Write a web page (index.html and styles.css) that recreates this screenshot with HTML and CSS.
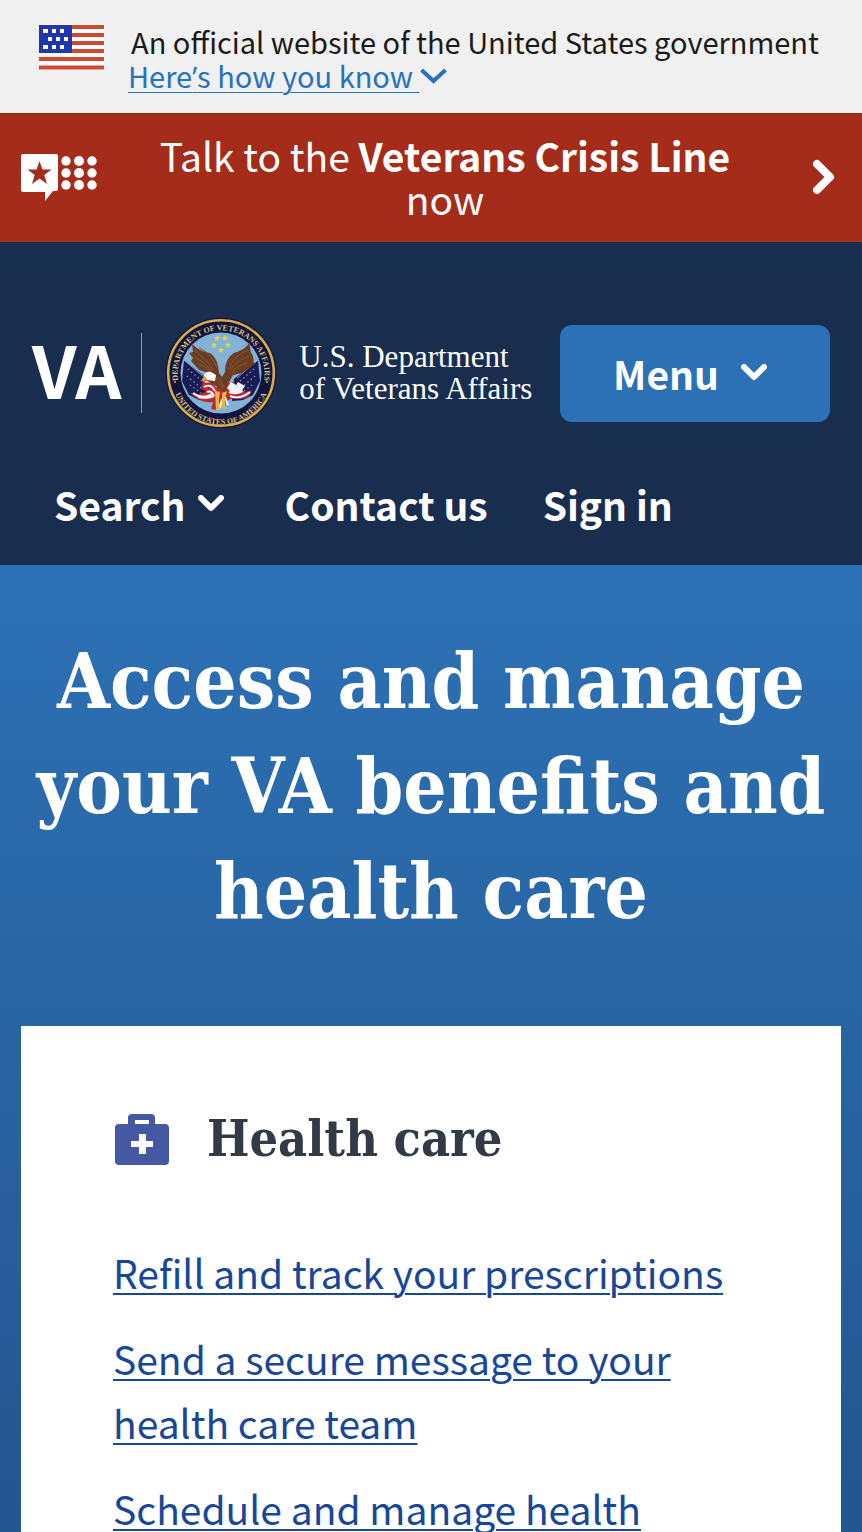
FILE: index.html
```html
<!DOCTYPE html>
<html lang="en">
<head>
<meta charset="utf-8">
<meta name="viewport" content="width=device-width, initial-scale=1">
<title>VA.gov Home</title>
<link rel="stylesheet" href="styles.css">
</head>
<body>
<section class="gov-banner" aria-label="Official government website">
  <svg class="flag" viewBox="0 0 65 46" aria-hidden="true">
    <path fill="#fff" d="M0 0h65v46H0z"/>
    <path stroke="#cc4a2e" stroke-width="4" d="M0 3h65M0 11h65M0 19h65M0 27h65M0 35h65M0 43.500h65"/>
    <path fill="#2037ab" d="M0 1h33v28H0z"/>
    <path fill="#fff" d="M4 5h5v4H4zM13 5h4v4h-4zM21 5h4v4h-4zM9 13h4v4H9zM17 13h4v4h-4zM25 13h4v4h-4zM4 21h5v4H4zM13 21h4v4h-4zM21 21h4v4h-4z"/>
  </svg>
  <div class="gov-text">
    <p class="gov-title">An official website of the United States government</p>
    <button class="gov-toggle" type="button"><span class="gov-label">Here<span class="apostrophe">’</span>s how you know&nbsp;</span><svg class="gov-chevron" viewBox="0 0 27 18" aria-hidden="true"><path fill="none" stroke="#2672bf" stroke-width="4" d="M1.500 3l12 11 12-11"/></svg></button>
  </div>
</section>

<a class="crisis" href="#crisis">
  <svg class="crisis-icon" viewBox="0 0 76 47" aria-hidden="true">
    <path fill="#fff" d="M2 0h33q2 0 2 2v33q0 2-2 2h-3L24 47V38H2q-2 0-2-2V2q0-2 2-2z"/>
    <path fill="#a52c1a" d="M18.500 7l3 8.500h9l-7.200 5.500 2.700 9-7.500-5.400-7.500 5.400 2.700-9L6.500 15.500h9z"/>
    <g fill="#fff"><circle cx="45" cy="7" r="4.700"/><circle cx="58" cy="7" r="5"/><circle cx="71" cy="7" r="4.700"/><circle cx="45" cy="19" r="4.700"/><circle cx="58" cy="19" r="5"/><circle cx="71" cy="19" r="4.700"/><circle cx="45" cy="31" r="4.700"/><circle cx="58" cy="31" r="5"/><circle cx="71" cy="31" r="4.700"/></g>
  </svg>
  <span class="crisis-text">Talk to the <strong>Veterans Crisis Line</strong> now</span>
  <svg class="crisis-arrow" viewBox="0 0 22 36" aria-hidden="true"><path fill="none" stroke="#fff" stroke-width="8" stroke-linecap="round" stroke-linejoin="round" d="M4 5l13 13L4 31"/></svg>
</a>

<header class="header">
  <div class="brand-row">
    <a class="brand" href="#home" aria-label="VA, U.S. Department of Veterans Affairs">
      <span class="brand-va">VA</span>
      <svg class="seal" viewBox="0 0 112 112" aria-hidden="true">
        <defs>
          <path id="arc-top" d="M13.500 66A43.500 43.500 0 1 1 98.500 66"/>
          <path id="arc-bottom" d="M7 65A49.500 49.500 0 0 0 105 65"/>
          <clipPath id="disc"><circle cx="56" cy="56" r="40.500"/></clipPath>
        </defs>
        <circle cx="56" cy="56" r="55.500" fill="#15163c"/>
        <circle cx="56" cy="56" r="52.800" fill="#11143e" stroke="#d9ad4e" stroke-width="2.600"/>
        <circle cx="56" cy="56" r="40.500" fill="#82b3d4"/>
        <text class="seal-text"><textPath href="#arc-top" startOffset="50%" text-anchor="middle">DEPARTMENT OF VETERANS AFFAIRS</textPath></text>
        <text class="seal-text"><textPath href="#arc-bottom" startOffset="50%" text-anchor="middle">UNITED STATES OF AMERICA</textPath></text>
        <circle cx="10" cy="65" r="1" fill="#d9ad4e"/><circle cx="102" cy="65" r="1" fill="#d9ad4e"/>
        <g clip-path="url(#disc)">
          <path fill="#171c52" d="M19 43l24 19 2 22-11-1-10-5-7-14zM93 43L69 62l-2 22 11-1 10-5 7-14z"/>
          <path stroke="#c9d6e8" stroke-width=".7" d="M19 43l21 18M93 43L72 61"/>
          <path fill="none" stroke="#8fa3c9" stroke-width="1.300" stroke-dasharray="1.300 3" d="M23 52l15 13M22 59l14 12M25 68l11 8M89 52L74 65M90 59L76 71M87 68l-11 8"/>
          <path fill="#bd2938" d="M24 75q10 5 17-1l-5-2 2-9 8-4 11 8 12-2 5 9q7 2 13-1-2 9-12 9-8-1-12 1l-4 8-4-5-4 7-5-1 2-7q-12 2-24-10z"/>
          <path fill="none" stroke="#fff" stroke-width="1.900" d="M28 76q9 7 19 1M40 65q7-3 12 5M39 70q7-4 11 4M42 75q5-2 7 4M33 80q8 2 16-1M65 79q10 4 20-4M64 75q8 3 14-1M57 82l-2 9M60 80l3 8"/>
          <path fill="#eef2f8" d="M66 65l5 3 2-3 7 4-4 6-9 1-5-5z"/>
        </g>
        <path fill="#6b3d22" d="M27 27q8 8 18 9 8 5 9 20l3 4 3-5q0-14 9-19 11-3 16-11-1 8 3 14l1 8-4 4-8 5-9 2-5 9-3 9-5-4-6-4-8-5 2-7-9-3-8-9 2-3-4-5 4-1z"/>
        <path fill="none" stroke="#8a5833" stroke-width="1" d="M30 34q12 8 18 18M30 40q10 5 17 14M33 47q8 2 13 8M34 31q13 5 18 20M83 33Q69 38 64 52M84 39q-12 4-19 14M82 46q-9 2-15 10M54 60l5 10M50 59l8 13"/>
        <path fill="#fff" d="M39 59q1-5 7-4l5 3-1 6-8-1z"/><path fill="#e6a932" d="M40 59l-3 3 1 3 4-3z"/>
        <path fill="#e7b746" d="M50 74l5 1-1 8 1 10h-4zM57 76l5-2-2 9 1 9-4-1z"/>
        <path fill="#e4cd58" d="M52 18l1 2h2l-1.600 1.600.6 2.400-2-1.300-2 1.300.6-2.400L49 20h2zM60 18l1 2h2l-1.600 1.600.6 2.400-2-1.300-2 1.300.6-2.400L57 20h2zM49 25l1 2h2l-1.600 1.600.6 2.400-2-1.300-2 1.300.6-2.400L46 27h2zM63 25l1 2h2l-1.600 1.600.6 2.400-2-1.300-2 1.300.6-2.400L60 27h2zM56 30l1 2h2l-1.600 1.600.6 2.400-2-1.300-2 1.300.6-2.400L53 32h2z"/>
      </svg>
      <span class="brand-name">U.S. Department<br>of Veterans Affairs</span>
    </a>
    <button class="menu" type="button">Menu <svg class="chevron" viewBox="0 0 26 18" aria-hidden="true"><path fill="none" stroke="#fff" stroke-width="6" stroke-linecap="round" stroke-linejoin="round" d="M3 3l10 10L23 3"/></svg></button>
  </div>
  <nav class="nav" aria-label="Site">
    <button class="nav-item nav-search" type="button">Search <svg class="chevron" viewBox="0 0 26 18" aria-hidden="true"><path fill="none" stroke="#fff" stroke-width="6" stroke-linecap="round" stroke-linejoin="round" d="M3 3l10 10L23 3"/></svg></button>
    <a class="nav-item" href="#contact">Contact us</a>
    <a class="nav-item" href="#signin">Sign in</a>
  </nav>
</header>

<main class="hero">
  <h1 class="hero-title">Access and manage your VA benefits and health care</h1>
  <section class="card" aria-labelledby="health">
    <div class="card-head">
      <svg class="kit" viewBox="0 0 54 51" aria-hidden="true"><path fill="#4559a3" fill-rule="evenodd" d="M4 10h9V4q0-4 4-4h19q4 0 4 4v6h10q4 0 4 4v33q0 4-4 4H4q-4 0-4-4V14q0-4 4-4zm16-4v4h14V6zM24 20v7h-8v6h8v7h7v-7h7v-6h-7v-7z"/></svg>
      <h2 class="card-title" id="health">Health care</h2>
    </div>
    <ul class="links">
      <li><a href="#refill">Refill and track your prescriptions</a></li>
      <li><a href="#message">Send a secure message to your health care team</a></li>
      <li><a href="#schedule">Schedule and manage health appointments</a></li>
    </ul>
  </section>
</main>
</body>
</html>
```
FILE: styles.css
```css
* { box-sizing: border-box; }
html { height: 100%; overflow: hidden; }
body {
  margin: 0;
  height: 100%;
  overflow: hidden;
  font-family: "Noto Sans CJK SC", "Noto Sans", sans-serif;
  color: #1b1b1b;
}
button {
  font: inherit;
  color: inherit;
  border: 0;
  background: none;
  padding: 0;
}
svg { display: block; flex: none; }

.gov-banner {
  display: flex;
  align-items: flex-start;
  gap: 24px;
  padding: 24px 39px 19px;
  background: #f0f0f0;
  font-size: 29px;
  line-height: 34px;
}
.flag { width: 65px; height: 46px; }
.gov-title { margin: 0 0 0 3px; white-space: nowrap; }
.gov-toggle { display: flex; align-items: center; color: #2672bf; }
.gov-label {
  text-decoration: underline;
  text-decoration-thickness: 1px;
  text-underline-offset: 4px;
}
.apostrophe { font-family: "Open Sans", sans-serif; }
.gov-chevron { width: 27px; height: 18px; }

.crisis {
  display: flex;
  align-items: center;
  gap: 30px;
  padding: 21px 27px 22px 21px;
  background: #a52c1a;
  color: #fff;
  font-size: 39px;
  line-height: 43px;
  text-align: center;
  text-decoration: none;
}
.crisis-icon { width: 76px; height: 47px; }
.crisis-text { flex: 1; padding-right: 20px; }
.crisis-arrow { width: 22px; height: 36px; }

.header {
  padding: 75px 32px 34px;
  background: #192e4f;
  color: #fff;
}
.brand-row {
  display: flex;
  align-items: center;
  justify-content: space-between;
}
.brand {
  display: flex;
  align-items: center;
  color: inherit;
  text-decoration: none;
}
.brand-va {
  padding: 0 20px 10px 0;
  border-right: 1px solid #8c98a9;
  font-size: 72px;
  font-weight: 700;
  line-height: 70px;
}
.seal { width: 112px; height: 112px; margin: 0 22px 0 23px; }
.seal-text {
  fill: #d8c17c;
  font: bold 8px "Liberation Serif", serif;
}
.brand-name {
  font: 31px/32px "Liberation Serif", serif;
  white-space: nowrap;
}
.menu {
  display: flex;
  align-items: center;
  justify-content: center;
  gap: 22px;
  width: 270px;
  height: 97px;
  padding-right: 10px;
  border-radius: 12px;
  background: #2c71b5;
  font-size: 39px;
  font-weight: 700;
}
.chevron { width: 26px; height: 18px; }
.nav {
  display: flex;
  gap: 55px;
  padding: 48px 22px 0;
}
.nav-item {
  display: flex;
  align-items: center;
  gap: 12px;
  color: inherit;
  font-size: 39px;
  font-weight: 700;
  line-height: 54px;
  text-decoration: none;
}
.nav-search { padding-right: 6px; }

.hero {
  padding: 64px 21px 0;
  background: linear-gradient(#2c71b5, #24568f 967px);
}
.hero-title {
  margin: 0;
  color: #fff;
  font: bold 76px/105px "DejaVu Serif Condensed", "DejaVu Serif", serif;
  text-align: center;
}
.card {
  margin-top: 82px;
  padding: 78px 92px;
  background: #fff;
}
.card-head {
  display: flex;
  align-items: center;
  gap: 38px;
  padding-left: 2px;
}
.kit { width: 54px; height: 51px; }
.card-title {
  margin: 0;
  color: #323a45;
  font: bold 50px/70px "DejaVu Serif Condensed", "DejaVu Serif", serif;
}
.links {
  display: grid;
  gap: 22px;
  margin: 66px 0 0;
  padding: 0;
  list-style: none;
  font-size: 39px;
  line-height: 64px;
}
.links a {
  color: #18479a;
  text-decoration-thickness: 2px;
  text-underline-offset: 4px;
}
```
